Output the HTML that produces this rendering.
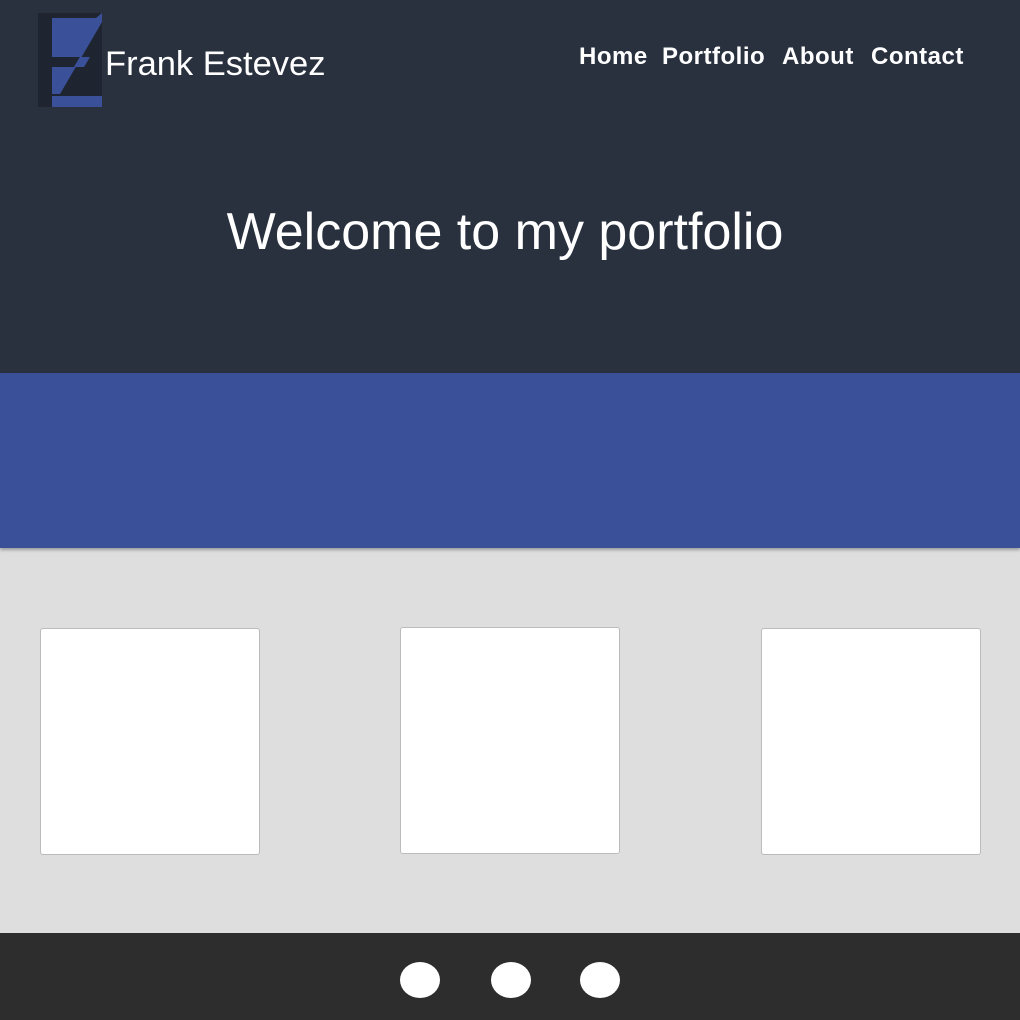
<!DOCTYPE html>
<html><head><style>
body{margin:0;width:1020px;height:1020px;overflow:hidden;font-family:"Liberation Sans",sans-serif;background:#dddedd;position:relative}
.hd{position:absolute;left:0;top:0;width:1020px;height:373px;background:#29313f}
.band{position:absolute;left:0;top:373px;width:1020px;height:175px;background:#3a5199;box-shadow:0 2px 3px rgba(0,0,0,.3)}
.name{position:absolute;left:105px;top:45px;color:#fff;font-size:34.5px}
.nav{position:absolute;top:43px;color:#fff;font-size:24px;font-weight:bold;letter-spacing:.5px}
h1{position:absolute;left:0;width:1010px;text-align:center;top:202px;margin:0;color:#fff;font-weight:normal;font-size:52px}
.card{position:absolute;top:628px;width:218px;height:225px;background:#fff;border:1px solid #bbb;border-radius:3px}
.ft{position:absolute;left:0;top:933px;width:1020px;height:87px;background:#2d2d2d}
.c{position:absolute;top:962px;width:40px;height:36px;border-radius:50%;background:#fff}
</style></head><body>
<div class="hd"></div>
<svg style="position:absolute;left:0;top:0" width="120" height="120">
<path d="M38 13H102V107H38Z" fill="#1e2430"/>
<polygon points="52,18 96,18 102,13 102,22 60,94 52,94" fill="#3a5199"/>
<polygon points="52,57 80,57 74,67 52,67" fill="#1e2430"/>
<polygon points="80,57 90,57 84,67 74,67" fill="#3a5199"/>
<polygon points="52,96 102,96 102,107 52,107" fill="#3a5199"/>
</svg>
<div class="name">Frank Estevez</div>
<div class="nav" style="left:579px">Home</div>
<div class="nav" style="left:662px">Portfolio</div>
<div class="nav" style="left:782px">About</div>
<div class="nav" style="left:871px">Contact</div>
<h1>Welcome to my portfolio</h1>
<div class="band"></div>
<div class="card" style="left:40px"></div>
<div class="card" style="left:400px;top:627px"></div>
<div class="card" style="left:761px"></div>
<div class="ft"></div>
<div class="c" style="left:400px"></div>
<div class="c" style="left:491px"></div>
<div class="c" style="left:580px"></div>
</body></html>
